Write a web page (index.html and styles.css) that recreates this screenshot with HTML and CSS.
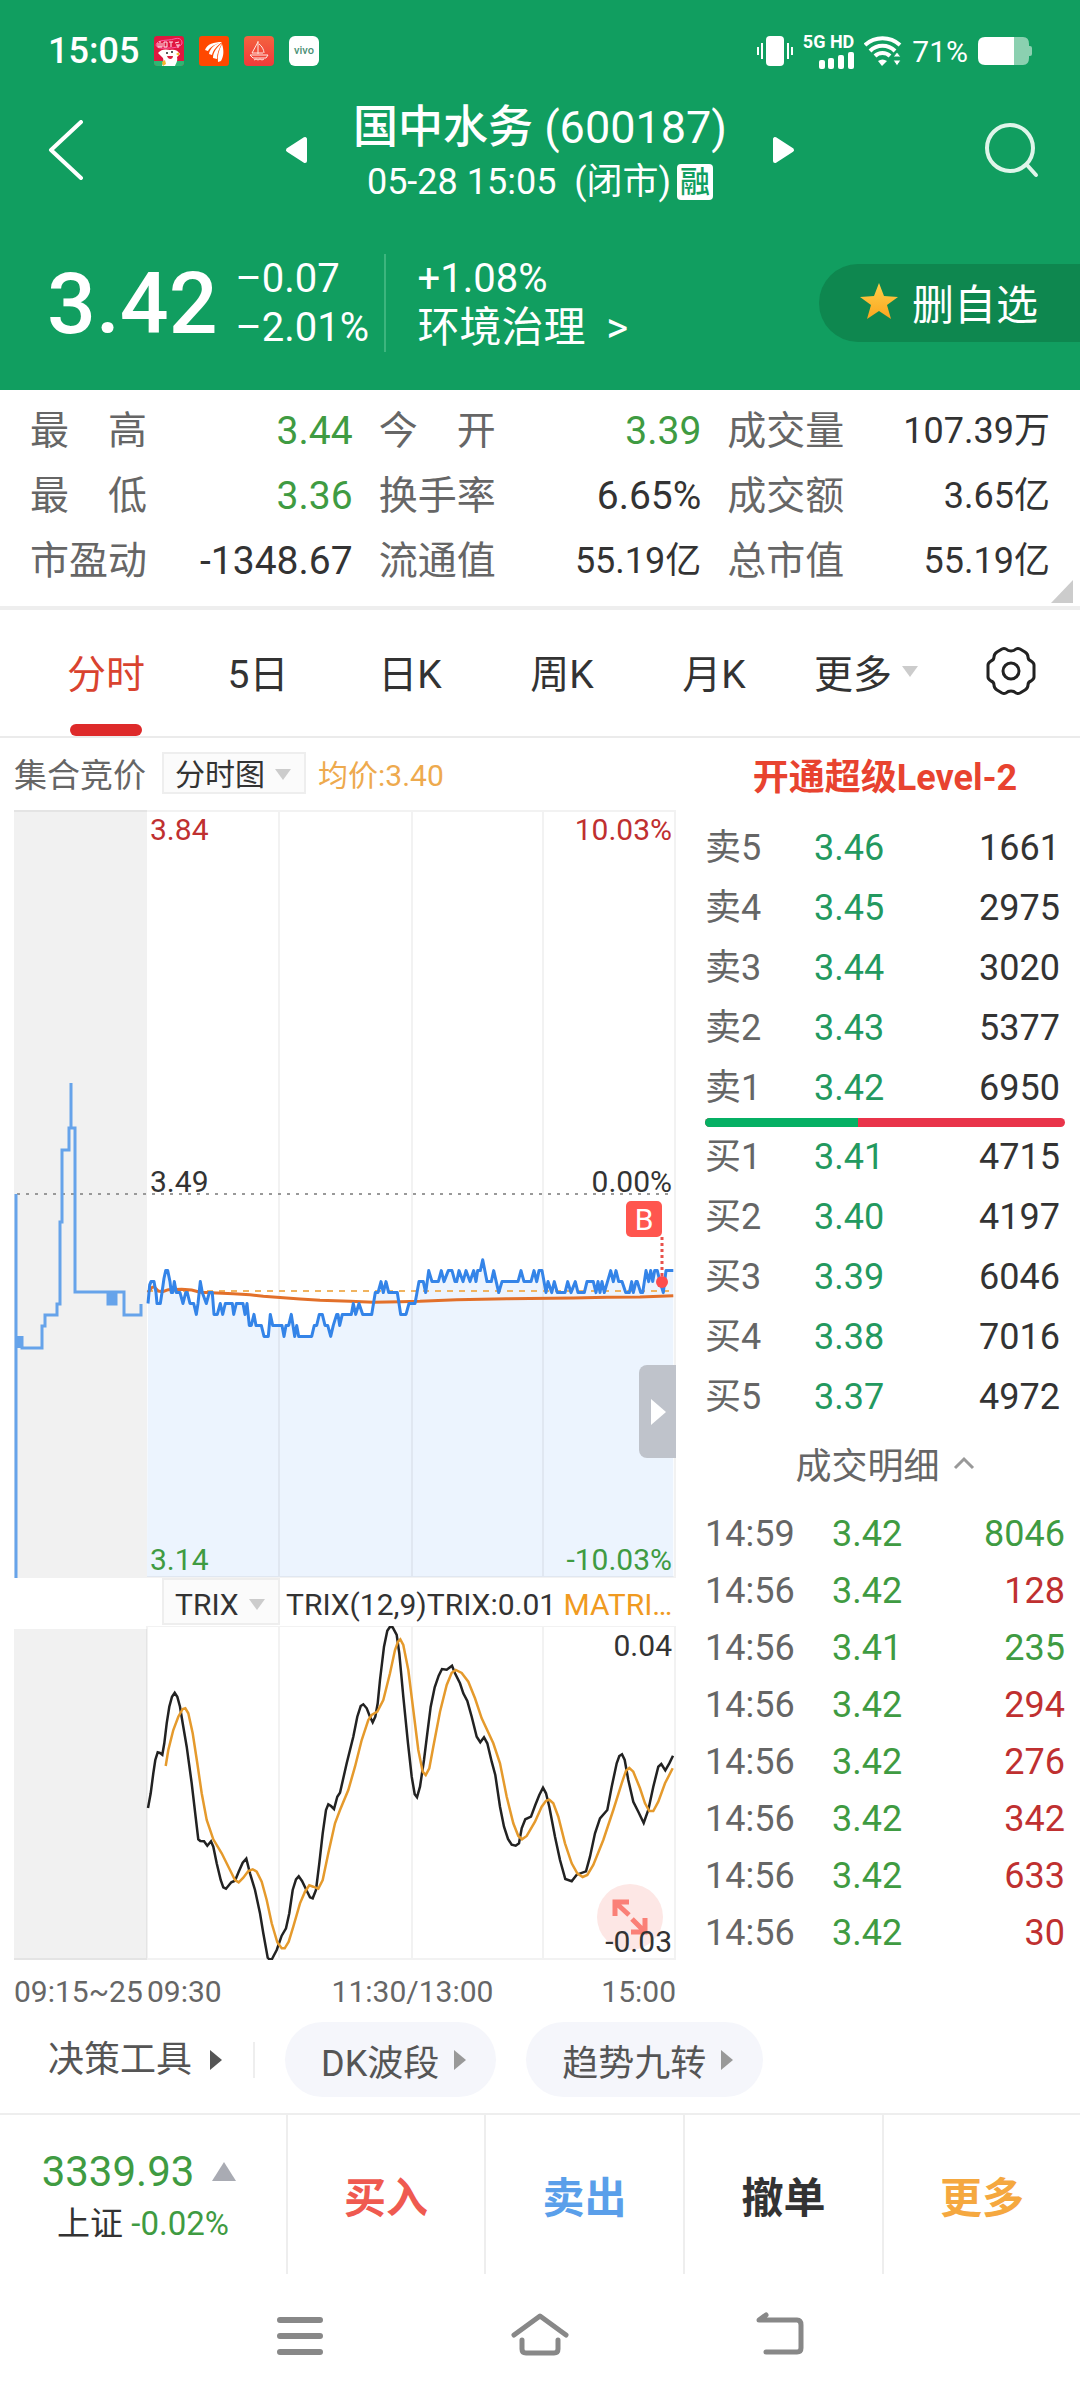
FILE: index.html
```html
<!DOCTYPE html>
<html lang="zh-CN">
<head>
  <meta charset="UTF-8">
  <meta name="viewport" content="width=device-width, initial-scale=1">
  <title>国中水务 (600187)</title>
  <link rel="stylesheet" href="styles.css">
</head>
<body>
  <header class="header">
    <div class="status-bar">
      <div class="status-left">
        <span class="clock">15:05</span>
        <svg class="app-icon" viewBox="0 0 30 30">
          <rect width="30" height="30" rx="3" fill="#e0173f"/>
          <path d="M0 25h30v2a3 3 0 0 1-3 3H3a3 3 0 0 1-3-3z" fill="#2fb672"/>
          <path d="M2 9C3 3 14 5 20 3s8 1 8 4-6 5-13 5-12 1-13-3" fill="none" stroke="#ff5fa8" stroke-width="1"/>
          <path d="M4 7v4h4V7M6 5v6M10 6h3v5h-3zM15 6h4M17 6v5M21 7l4-1M22 9h4M24 9v3" fill="none" stroke="#ffe6ee" stroke-width="1"/>
          <path d="M4 17c3-4 8-4 12-3 4-1 8 0 10 4l-3 3c1 4-1 6-2 9H8c1-3 2-5 1-8z" fill="#fff"/>
          <circle cx="13" cy="17" r="1" fill="#222"/><circle cx="18" cy="16" r="1" fill="#222"/>
          <path d="M13 20h6c0 4-5 4-6 0z" fill="#d9213f"/>
          <path d="M22 18l3-2v4zM8 26l3-2 1 4-3 2z" fill="#f6b52c"/>
        </svg>
        <svg class="app-icon" viewBox="0 0 30 30">
          <rect width="30" height="30" rx="3" fill="#ff4800"/>
          <path d="M6 14C8 8 15 6 23 6 16 8 11 11 9 15zM10 18c1-6 6-10 13-12-5 4-9 8-10 13zM14 22c0-6 4-11 9-15-3 6-5 10-5 16zM19 26c-1-6 1-12 4-18 2 6 2 12-1 17z" fill="#fff"/>
        </svg>
        <svg class="app-icon" viewBox="0 0 30 30">
          <defs><linearGradient id="sail" x1="0" y1="0" x2="0" y2="1"><stop offset="0" stop-color="#f4633f"/><stop offset="1" stop-color="#f03a3a"/></linearGradient></defs>
          <rect width="30" height="30" rx="4" fill="url(#sail)"/>
          <path d="M14 5v13M14 6L8 17h11M15 8c3 2 5 6 5 9M6 19h18l-2 3H9zM10 24l2-1 2 1 2-1 2 1 2-1" fill="none" stroke="#ffe9e2" stroke-width="1"/>
        </svg>
        <svg class="app-icon" viewBox="0 0 30 30">
          <rect width="30" height="30" rx="6" fill="#fff"/>
          <text x="15" y="18" text-anchor="middle" font-size="11" font-weight="500" fill="#4a8f74">vivo</text>
        </svg>
      </div>
      <div class="status-right">
        <svg width="36" height="30" viewBox="0 0 36 30" fill="#fff">
          <rect x="9" y="0" width="18" height="30" rx="4"/>
          <rect x="4" y="7" width="2" height="16"/><rect x="0" y="11" width="2" height="8"/>
          <rect x="30" y="7" width="2" height="16"/><rect x="34" y="11" width="2" height="8"/>
        </svg>
        <div class="signal">
          <span>5G HD</span>
          <svg width="36" height="17" viewBox="0 0 36 17" fill="#fff">
            <rect x="1" y="8" width="6" height="9" rx="2"/><rect x="10" y="6" width="6" height="11" rx="2"/>
            <rect x="20" y="3" width="6" height="14" rx="2"/><rect x="30" y="0" width="6" height="17" rx="2"/>
          </svg>
        </div>
        <svg width="38" height="30" viewBox="0 0 38 30" fill="none" stroke="#fff" stroke-width="4">
          <path d="M1 9c10-9 25-9 35 0M6 15c7-7 18-7 25 0M11 20c4-4 11-4 15 0"/>
          <path d="M14 25c3-2 6-2 9 0l-5 5z" fill="#fff" stroke="none"/>
          <path d="M29 21l4-5 4 5zM29 24h8l-4 6z" fill="#fff" stroke="#119e60" stroke-width="1"/>
        </svg>
        <span class="battery-text">71%</span>
        <svg width="54" height="28" viewBox="0 0 54 28">
          <path d="M36 0h9q6 0 6 7v2h1q2 0 2 2v6q0 2-2 2h-1v2q0 7-6 7h-9z" fill="#8bd0b0"/>
          <path d="M36 0H7Q0 0 0 7v14q0 7 7 7h29z" fill="#fff"/>
        </svg>
      </div>
    </div>

    <div class="title-row">
      <button class="icon-button back" aria-label="返回">
        <svg width="36" height="60" viewBox="0 0 36 60"><path d="M33 2L3 30l30 28" fill="none" stroke="#fff" stroke-width="4" stroke-linecap="round" stroke-linejoin="round"/></svg>
      </button>
      <div class="title-center">
        <button class="icon-button" aria-label="上一只">
          <svg width="22" height="28" viewBox="0 0 22 28"><path d="M20 3v22L3 14z" fill="#fff" stroke="#fff" stroke-width="4" stroke-linejoin="round"/></svg>
        </button>
        <div class="title-text">
          <h1>国中水务 <span>(600187)</span></h1>
          <p><span>05-28 15:05&nbsp; (闭市)</span><span class="tag">融</span></p>
        </div>
        <button class="icon-button" aria-label="下一只">
          <svg width="22" height="28" viewBox="0 0 22 28"><path d="M2 3v22l17-11z" fill="#fff" stroke="#fff" stroke-width="4" stroke-linejoin="round"/></svg>
        </button>
      </div>
      <button class="icon-button" aria-label="搜索">
        <svg width="56" height="60" viewBox="0 0 56 60" fill="none" stroke="#dff5ea" stroke-width="4" stroke-linecap="round"><circle cx="27" cy="28" r="23"/><path d="M44 45l9 10"/></svg>
      </button>
    </div>

    <div class="price-row">
      <span class="price">3.42</span>
      <div class="pair change"><span>–0.07</span><span>–2.01%</span></div>
      <div class="pair sector"><span>+1.08%</span><a href="#">环境治理 &nbsp;&gt;</a></div>
      <button class="watch-button">
        <svg width="38" height="36" viewBox="0 0 38 36">
          <defs><linearGradient id="gold" x1="0" y1="0" x2="0" y2="1"><stop offset="0" stop-color="#ffd04a"/><stop offset="1" stop-color="#fba51f"/></linearGradient></defs>
          <path d="M19 0l5 13 14 1-11 8 4 14-12-8-12 8 4-14L0 14l14-1z" fill="url(#gold)"/>
        </svg>
        删自选
      </button>
    </div>
  </header>

  <dl class="stats">
    <div><dt>最　高</dt><dd class="down">3.44</dd></div>
    <div><dt>今　开</dt><dd class="down">3.39</dd></div>
    <div><dt>成交量</dt><dd class="small">107.39万</dd></div>
    <div><dt>最　低</dt><dd class="down">3.36</dd></div>
    <div><dt>换手率</dt><dd>6.65%</dd></div>
    <div><dt>成交额</dt><dd class="small">3.65亿</dd></div>
    <div><dt>市盈动</dt><dd>-1348.67</dd></div>
    <div><dt>流通值</dt><dd class="small">55.19亿</dd></div>
    <div><dt>总市值</dt><dd class="small">55.19亿</dd></div>
  </dl>

  <nav class="tabs">
    <button class="tab active">分时</button>
    <button class="tab">5日</button>
    <button class="tab">日K</button>
    <button class="tab">周K</button>
    <button class="tab">月K</button>
    <button class="tab">更多<i class="arrow-down"></i></button>
    <button class="tab settings" aria-label="设置">
      <svg width="50" height="50" viewBox="0 0 50 50" fill="none" stroke="#222" stroke-width="3" stroke-linejoin="round">
        <path d="M25 5q3 0 5-2 2-1 4 0l5 3q3 2 3 5 0 3 3 4 3 2 3 4v12q0 2-3 4-3 1-3 4 0 3-3 5l-5 3q-2 1-4 0-2-2-5-2-3 0-5 2-2 1-4 0l-5-3q-3-2-3-5 0-3-3-4-3-2-3-4V19q0-2 3-4 3-1 3-4 0-3 3-5l5-3q2-1 4 0 2 2 5 2z"/>
        <circle cx="25" cy="25" r="8"/>
      </svg>
    </button>
  </nav>

  <main class="main">
    <section class="charts">
      <div class="chart-head">
        <span class="auction">集合竞价</span>
        <label class="picker"><select aria-label="图表"><option>分时图</option></select><i class="arrow-down"></i></label>
        <span class="average">均价:3.40</span>
      </div>

      <div class="chart price-chart">
        <svg viewBox="0 0 662 768" preserveAspectRatio="none">
          <rect x="0" y="0" width="133" height="768" fill="#f1f1f1"/>
          <path id="price-area" fill="#ecf4fe"/>
          <path class="grid" d="M0 1h662M133 767h529M265 0v768M398 0v768M529 0v768M661 0v768"/>
          <path d="M3 384h657" fill="none" stroke="#999" stroke-width="2" stroke-dasharray="3 6"/>
          <path class="auction-line" d="M2 384v384M3 526v11M5 526v12M8 526v12h20v-22h3v-11h12v-11h3V412h2V340h7V318h2V273V318h4V482h33v12h3v-12h3v12h2v-12h8v23h17v-11"/>
          <path d="M133 481h528" fill="none" stroke="#f0b35f" stroke-width="2" stroke-dasharray="6 6"/>
          <path id="price-average" fill="none" stroke="#e2702a" stroke-width="3"/>
          <path id="price-line" fill="none" stroke="#3484e8" stroke-width="3" stroke-linejoin="round"/>
          <rect x="612" y="391" width="36" height="36" rx="5" fill="#ff564f"/>
          <text x="630" y="420" text-anchor="middle" font-size="30" fill="#fff">B</text>
          <path d="M648 427v39" stroke="#e8514b" stroke-width="3" stroke-dasharray="3 3"/>
          <circle cx="648" cy="472" r="6" fill="#ff4d4d"/>
        </svg>
        <span class="label top left up">3.84</span>
        <span class="label top right up">10.03%</span>
        <span class="label middle left">3.49</span>
        <span class="label middle right">0.00%</span>
        <span class="label bottom left down">3.14</span>
        <span class="label bottom right down">-10.03%</span>
        <button class="drawer" aria-label="收起盘口"><i></i></button>
      </div>

      <div class="index-head">
        <label class="picker"><select aria-label="指标"><option>TRIX</option></select><i class="arrow-down"></i></label>
        <span class="index-text">TRIX(12,9)TRIX:0.01 <b>MATRI…</b></span>
      </div>

      <div class="chart trix-chart">
        <svg viewBox="0 0 662 334" preserveAspectRatio="none">
          <rect x="0" y="3" width="133" height="331" fill="#f1f1f1"/>
          <path class="grid" d="M133 0v333M265 0v334M398 0v334M529 0v334M661 0v334M133 0h529M0 333h662"/>
          <path id="trix-line" fill="none" stroke="#222" stroke-width="2.5"/>
          <path id="trix-average" fill="none" stroke="#e59a2c" stroke-width="2.5"/>
        </svg>
        <button class="expand" aria-label="全屏">
          <svg width="36" height="36" viewBox="0 0 36 36" fill="none" stroke="#fa8077" stroke-width="5"><path d="M17 3H3v14M4 4l13 12M33 19v14H19M32 32L20 20"/></svg>
        </button>
        <span class="label top right">0.04</span>
        <span class="label bottom right">-0.03</span>
      </div>

      <div class="axis">
        <span>09:15~25</span><span>09:30</span><span>11:30/13:00</span><span>15:00</span>
      </div>
    </section>

    <aside class="quotes">
      <a class="level2" href="#">开通超级Level-2</a>
      <table class="book">
        <tr><th>卖5</th><td>3.46</td><td>1661</td></tr>
        <tr><th>卖4</th><td>3.45</td><td>2975</td></tr>
        <tr><th>卖3</th><td>3.44</td><td>3020</td></tr>
        <tr><th>卖2</th><td>3.43</td><td>5377</td></tr>
        <tr><th>卖1</th><td>3.42</td><td>6950</td></tr>
      </table>
      <div class="ratio"><span style="width: 42.5%"></span></div>
      <table class="book">
        <tr><th>买1</th><td>3.41</td><td>4715</td></tr>
        <tr><th>买2</th><td>3.40</td><td>4197</td></tr>
        <tr><th>买3</th><td>3.39</td><td>6046</td></tr>
        <tr><th>买4</th><td>3.38</td><td>7016</td></tr>
        <tr><th>买5</th><td>3.37</td><td>4972</td></tr>
      </table>
      <button class="detail-toggle">成交明细
        <svg width="22" height="14" viewBox="0 0 22 14"><path d="M2 12l9-9 9 9" fill="none" stroke="#999" stroke-width="3"/></svg>
      </button>
      <table class="trades">
        <tr><th>14:59</th><td>3.42</td><td class="down">8046</td></tr>
        <tr><th>14:56</th><td>3.42</td><td class="up">128</td></tr>
        <tr><th>14:56</th><td>3.41</td><td class="down">235</td></tr>
        <tr><th>14:56</th><td>3.42</td><td class="up">294</td></tr>
        <tr><th>14:56</th><td>3.42</td><td class="up">276</td></tr>
        <tr><th>14:56</th><td>3.42</td><td class="up">342</td></tr>
        <tr><th>14:56</th><td>3.42</td><td class="up">633</td></tr>
        <tr><th>14:56</th><td>3.42</td><td class="up">30</td></tr>
      </table>
    </aside>
  </main>

  <div class="tools">
    <button class="tool-main">决策工具<i class="arrow-right"></i></button>
    <button class="tool-pill">DK波段<i class="arrow-right"></i></button>
    <button class="tool-pill">趋势九转<i class="arrow-right"></i></button>
  </div>

  <footer class="actions">
    <div class="market">
      <p class="market-value">3339.93<i class="arrow-up"></i></p>
      <p class="market-name">上证 <span class="down">-0.02%</span></p>
    </div>
    <button class="action buy">买入</button>
    <button class="action sell">卖出</button>
    <button class="action">撤单</button>
    <button class="action more">更多</button>
  </footer>

  <nav class="system-nav">
    <button class="icon-button" aria-label="菜单">
      <svg width="60" height="48" viewBox="0 0 60 48" fill="none" stroke="#888" stroke-width="6" stroke-linecap="round"><path d="M10 9h40M10 25h40M10 41h40"/></svg>
    </button>
    <button class="icon-button" aria-label="主页">
      <svg width="60" height="48" viewBox="0 0 60 48" fill="none" stroke="#888" stroke-width="5" stroke-linecap="round" stroke-linejoin="round"><path d="M4 24L30 5l26 19"/><path d="M12 29v9q0 4 4 4h28q4 0 4-4v-9" /></svg>
    </button>
    <button class="icon-button" aria-label="后退">
      <svg width="60" height="48" viewBox="0 0 60 48" fill="none" stroke="#888" stroke-width="5" stroke-linecap="round" stroke-linejoin="round"><path d="M16 41h31q4 0 4-4V14q0-5-4-5H9l7-5"/></svg>
    </button>
  </nav>

  <script>
    // x in thirds of a pixel, price in hundredths above 3.00
    const priceMorning = '444,39 449,40.7 453,41 462,41 468,40 471,39 481,39 486,40 492,41.3 497,42 503,42 510,41 514,40 518,40 523,41 529,40 540,40 549,39 557,40 562,40 570,39 581,39 589,38 594,39 601,41 607,40 619,39 628,40 637,40 642,38 652,38 661,39 668,38 676,39 697,39 701,38 709,39 729,39 735,38 741,39 748,37 754,37 762,38 768,37 784,37 792,36 805,36 811,38 818,37 846,37 852,36 858,37 866,37 874,38 884,36 890,37 896,36 935,36 943,37 950,37 958,38 967,38 975,37 983,37 992,36 1000,37 1010,38 1014,38 1019,37';
    const priceLate = '7,38 34,38 40,39 47,38 57,39 68,38 95,38 106,40 114,40 123,41 130,40 138,41 146,40 172,40 182,38 198,38 207,39 225,39 237,41 250,41 257,40 266,42 276,41 295,41 304,42 312,41 325,42 336,42 345,41 350,41 357,42 369,41 378,42 390,41 401,42 408,41 413,42 421,42 428,43 441,41 454,41 461,42 476,40 486,41 534,41 543,42 552,41 573,41 582,42 590,41 597,42 606,42 618,40 624,41 635,40 643,41 652,40 675,40 683,41 693,40 706,41 714,40 733,40 741,41 760,41 768,40 774,41 780,40 786,41 793,40 812,42 820,41 828,42 836,41 846,41 857,40 868,40 875,41 880,40 888,41 892,41 902,40 908,40 918,42 926,41 932,42 938,41 944,42 952,42 960,41 970,40 978,42 1000,42';
    const averageMorning = '444,398 455,383 462,380 475,393 488,395 505,389 545,388 575,390 600,397 700,401 750,404 790,409 850,413 900,417 960,421';
    const averageLate = '30,424 100,427 180,425 240,424 350,419 500,416 700,414 800,412 900,411 1000,407';
    const trixMorning = '444,624 452,580 460,520 466,480 473,457 480,459 487,464 493,430 500,370 508,320 516,290 524,278 532,290 540,320 548,370 560,440 575,550 588,660 595,718 601,723 612,724 622,737 633,724 640,740 650,790 662,840 670,862 678,866 694,847 705,842 716,815 728,788 739,776 750,820 765,870 780,940 790,1000 803,1073 808,1078 816,1077 830,1050 845,1007 858,985 868,940 878,870 888,838 896,829 906,843 918,868 930,892 938,895 948,870 958,790 968,700 978,630 985,613 993,618 1002,627 1012,590';
    const trixLate = '0,578 20,490 40,410 52,350 62,318 70,313 80,325 90,350 98,367 106,350 113,310 120,240 132,140 142,92 150,80 158,82 170,105 178,160 190,290 204,430 215,530 224,583 231,592 240,560 252,480 262,400 272,320 284,262 296,227 306,207 320,209 336,197 345,220 360,250 370,280 382,303 395,350 410,410 421,427 432,412 442,430 455,485 466,525 480,620 492,680 504,717 515,734 527,737 537,730 545,685 556,658 573,650 586,615 598,585 609,563 618,580 628,620 645,710 660,780 676,837 695,844 710,824 738,814 750,770 765,700 780,655 802,630 815,560 830,490 838,468 846,463 854,480 865,540 880,605 895,635 911,669 925,630 940,560 955,500 964,492 976,511 988,490 999,467';
    const matrixMorning = '497,498 505,450 520,390 535,350 548,327 556,325 565,340 578,400 592,490 605,580 620,660 640,718 665,760 690,810 705,840 716,847 730,833 745,813 758,808 770,815 785,845 800,900 815,970 832,1027 845,1045 854,1045 866,1025 880,980 900,910 915,875 928,856 940,860 955,866 968,840 985,760 1005,670';
    const matrixLate = '0,630 25,570 45,500 65,420 85,360 95,345 112,335 130,300 150,220 165,150 174,125 181,118 190,135 205,210 220,330 235,450 248,515 257,525 268,505 280,440 300,335 320,255 335,218 347,210 365,219 385,245 405,295 425,355 460,430 480,490 500,590 520,670 535,708 546,718 560,708 585,665 605,620 618,602 628,599 640,610 655,650 675,730 695,790 712,820 728,831 742,825 760,795 790,720 820,630 845,550 858,512 868,504 880,515 900,565 915,610 928,633 940,633 955,605 975,550 998,505';

    function buildPath(morning, late, toY) {
      const points = [];
      for (const [part, shift] of [[morning, 0], [late, 1020]]) {
        for (const pair of part.split(' ')) {
          const [x, y] = pair.split(',').map(Number);
          points.push(((x + shift) / 3 - 14).toFixed(1) + ' ' + toY(y).toFixed(1));
        }
      }
      return 'M' + points.join('L');
    }

    function draw(id, d) {
      document.getElementById(id).setAttribute('d', d);
    }

    const pricePath = buildPath(priceMorning, priceLate, p => 384 + (49 - p) * 10.95);
    draw('price-line', pricePath);
    draw('price-area', pricePath + 'V767H133Z');
    draw('price-average', buildPath(averageMorning, averageLate, y => 350 + y / 3));
    draw('trix-line', buildPath(trixMorning, trixLate, y => (y - 78) / 3));
    draw('trix-average', buildPath(matrixMorning, matrixLate, y => (y - 78) / 3));
  </script>
</body>
</html>
```
FILE: styles.css
```css
/* Main Styles */
* {
  box-sizing: border-box;
}

body {
  margin: 0;
  background-color: #fff;
  color: #333;
  font-family: Roboto, "Noto Sans CJK SC", sans-serif;
  font-size: 36px;
}

h1, p, dl, dd {
  margin: 0;
}

svg {
  display: block;
}

button {
  border: none;
  padding: 0;
  background: none;
  color: inherit;
  font: inherit;
  cursor: pointer;
}

a {
  color: inherit;
  text-decoration: none;
}

.up {
  color: #bf3030;
}

.down {
  color: #3f9b42;
}

.arrow-down {
  border: 8px solid transparent;
  border-top: 11px solid #ccc;
  border-bottom: none;
}

.arrow-up {
  border: 12px solid transparent;
  border-bottom: 19px solid #a9abb3;
  border-top: none;
}

.arrow-right {
  border: 10px solid transparent;
  border-left: 12px solid #999;
  border-right: none;
}

/* Header Styles */
.header {
  background-color: #119e60;
  color: #fff;
  padding-bottom: 38px;
}

.status-bar {
  display: flex;
  justify-content: space-between;
  align-items: center;
  height: 102px;
  padding: 0 48px;
}

.status-left {
  display: flex;
  align-items: center;
  gap: 15px;
}

.clock {
  font-weight: 500;
}

.app-icon {
  width: 30px;
  height: 30px;
}

.status-right {
  display: flex;
  align-items: center;
  gap: 10px;
}

.signal {
  display: flex;
  flex-direction: column;
  align-items: flex-end;
  gap: 2px;
  font-size: 18px;
  font-weight: 700;
  line-height: 16px;
}

.battery-text {
  font-size: 30px;
}

.title-row {
  display: flex;
  justify-content: space-between;
  align-items: center;
  height: 96px;
  padding: 0 41px 0 48px;
}

.back {
  width: 49px;
}

.title-center {
  display: flex;
  align-items: center;
  gap: 46px;
}

.title-text {
  padding-top: 12px;
  text-align: center;
}

.title-text h1 {
  font-size: 45px;
  font-weight: 500;
  line-height: 52px;
}

.title-text h1 span {
  font-weight: 400;
}

.title-text p {
  display: flex;
  justify-content: center;
  align-items: center;
  gap: 6px;
  line-height: 56px;
}

.tag {
  width: 36px;
  height: 36px;
  border-radius: 4px;
  background-color: #fff;
  color: #119e60;
  font-size: 30px;
  font-weight: 500;
  line-height: 36px;
  text-align: center;
}

.price-row {
  display: flex;
  align-items: center;
  height: 98px;
  margin-top: 56px;
  padding-left: 47px;
}

.price {
  font-size: 86px;
  font-weight: 500;
}

.pair {
  display: flex;
  flex-direction: column;
  font-size: 40px;
  line-height: 49px;
}

.change {
  width: 148px;
  margin-left: 18px;
}

.sector {
  border-left: 2px solid #3db57e;
  padding-left: 32px;
}

.sector a {
  font-size: 42px;
}

.watch-button {
  display: flex;
  align-items: center;
  gap: 14px;
  height: 78px;
  margin-left: auto;
  padding: 0 42px 4px 41px;
  border-radius: 39px 0 0 39px;
  background-color: #0e874f;
  font-size: 42px;
}

/* Stats Styles */
.stats {
  position: relative;
  display: grid;
  grid-template-columns: repeat(3, 1fr);
  column-gap: 26px;
  padding: 9px 30px 12px;
  border-bottom: 4px solid #eee;
  font-size: 39px;
  line-height: 65px;
}

.stats::after {
  content: "";
  position: absolute;
  right: 7px;
  bottom: 3px;
  border-left: 22px solid transparent;
  border-bottom: 23px solid #ccc;
}

.stats div {
  display: flex;
  justify-content: space-between;
}

.stats dt {
  color: #666;
}

.stats .small {
  font-size: 36px;
}

/* Tab Styles */
.tabs {
  display: flex;
  height: 128px;
  padding-left: 30px;
  border-bottom: 2px solid #ebebeb;
  font-size: 39px;
}

.tab {
  position: relative;
  display: flex;
  flex: 152;
  justify-content: center;
  align-items: center;
  gap: 10px;
  padding-bottom: 4px;
}

.settings {
  flex: 138;
}

.active {
  color: #d9432f;
}

.active::after {
  content: "";
  position: absolute;
  bottom: 0;
  width: 72px;
  height: 12px;
  border-radius: 6px;
  background-color: #de2a2a;
}

/* Chart Styles */
.main {
  display: grid;
  grid-template-columns: 662fr 360fr;
  gap: 29px;
  padding: 0 15px 0 14px;
}

.chart-head {
  display: flex;
  align-items: center;
  height: 72px;
  padding-bottom: 2px;
  font-size: 30px;
}

.auction {
  width: 148px;
  color: #666;
  font-size: 33px;
}

.picker {
  display: flex;
  align-items: center;
  gap: 10px;
  height: 42px;
  padding: 2px 13px 0 11px;
  border: 2px solid #eee;
  background-color: #fbfbfb;
}

.picker select {
  appearance: none;
  border: none;
  padding: 0;
  background: none;
  color: #333;
  font: inherit;
}

.average {
  margin-left: 12px;
  color: #eeaa4e;
}

.chart {
  position: relative;
  font-size: 30px;
  line-height: 36px;
}

.chart > svg {
  width: 100%;
  height: 100%;
}

.price-chart {
  height: 768px;
}

.trix-chart {
  height: 334px;
}

.grid {
  fill: none;
  stroke: #000;
  stroke-opacity: 0.05;
  stroke-width: 2;
}

.auction-line {
  fill: none;
  stroke: #66a3ea;
  stroke-width: 3;
}

.label {
  position: absolute;
}

.left {
  left: 136px;
}

.right {
  right: 4px;
}

.top {
  top: 2px;
}

.middle {
  top: 354px;
}

.bottom {
  bottom: 0;
}

.drawer {
  position: absolute;
  right: 0;
  top: 555px;
  width: 37px;
  height: 93px;
  padding-left: 12px;
  border-radius: 8px 0 0 8px;
  background-color: #bfc3cb;
}

.drawer i {
  display: block;
  width: 0;
  border: 13px solid transparent;
  border-left: 15px solid #fff;
  border-right: none;
}

.index-head {
  display: flex;
  height: 48px;
  padding-left: 148px;
  font-size: 30px;
  line-height: 54px;
}

.index-head .picker {
  height: 47px;
  padding-top: 6px;
}

.index-text {
  margin-left: 6px;
  white-space: nowrap;
}

.index-text b {
  color: #f09a20;
  font-weight: 400;
}

.expand {
  position: absolute;
  right: 13px;
  bottom: 10px;
  width: 66px;
  height: 66px;
  padding: 15px;
  border-radius: 50%;
  background-color: #fde7e5;
}

.axis {
  display: grid;
  grid-template-columns: 133fr 132fr 267fr 130fr;
  height: 62px;
  color: #666;
  font-size: 30px;
  line-height: 64px;
}

.axis span:nth-child(3) {
  text-align: center;
}

.axis span:last-child {
  text-align: right;
}

/* Quote Styles */
.level2 {
  display: block;
  color: #e8432f;
  font-weight: 700;
  line-height: 80px;
  text-align: center;
}

table {
  border-collapse: collapse;
  width: 100%;
}

th, td {
  padding: 0;
  text-align: left;
}

th {
  color: #666;
  font-weight: 400;
}

td:last-child {
  text-align: right;
}

.book tr {
  height: 60px;
  line-height: 60px;
}

.book th {
  width: 109px;
}

.book td:nth-child(2) {
  color: #23995f;
}

.book td:last-child {
  padding-right: 5px;
}

.ratio {
  height: 9px;
  border-radius: 5px;
  background-color: #e9344a;
  overflow: hidden;
}

.ratio span {
  display: block;
  height: 100%;
  background-color: #05b064;
}

.detail-toggle {
  display: flex;
  justify-content: center;
  align-items: center;
  gap: 13px;
  width: 100%;
  height: 79px;
  padding-bottom: 8px;
  color: #666;
}

.trades tr {
  height: 57px;
  line-height: 57px;
}

.trades th {
  width: 127px;
}

.trades td:nth-child(2) {
  color: #3f9b42;
}

/* Tool Styles */
.tools {
  display: flex;
  align-items: center;
  gap: 30px;
  padding: 0 48px 16px;
  border-bottom: 2px solid #eee;
  color: #555;
}

.tools button {
  display: flex;
  align-items: center;
  gap: 18px;
}

.tool-main {
  padding-right: 31px;
  border-right: 2px solid #eee;
  line-height: 36px;
}

.tool-main .arrow-right {
  border-left-color: #555;
}

.tools .tool-pill {
  height: 75px;
  gap: 15px;
  padding: 0 30px 0 36px;
  border-radius: 38px;
  background-color: #f5f6fb;
}

/* Bottom Bar Styles */
.actions {
  display: grid;
  grid-template-columns: 286fr 198fr 199fr 199fr 198fr;
  height: 159px;
}

.market {
  display: flex;
  flex-direction: column;
  justify-content: center;
  padding-top: 4px;
  text-align: center;
}

.market-value {
  display: flex;
  justify-content: center;
  align-items: center;
  gap: 18px;
  padding-right: 8px;
  color: #3f9b42;
  font-size: 42px;
  line-height: 54px;
}

.market-name {
  font-size: 33px;
  line-height: 50px;
}

.action {
  border-left: 2px solid #eee;
  font-size: 42px;
  font-weight: 700;
}

.buy {
  color: #ef5a50;
}

.sell {
  color: #5a9fea;
}

.more {
  color: #f5a83f;
}

.system-nav {
  display: flex;
  justify-content: center;
  align-items: center;
  gap: 180px;
  height: 126px;
  padding-bottom: 4px;
}
```
